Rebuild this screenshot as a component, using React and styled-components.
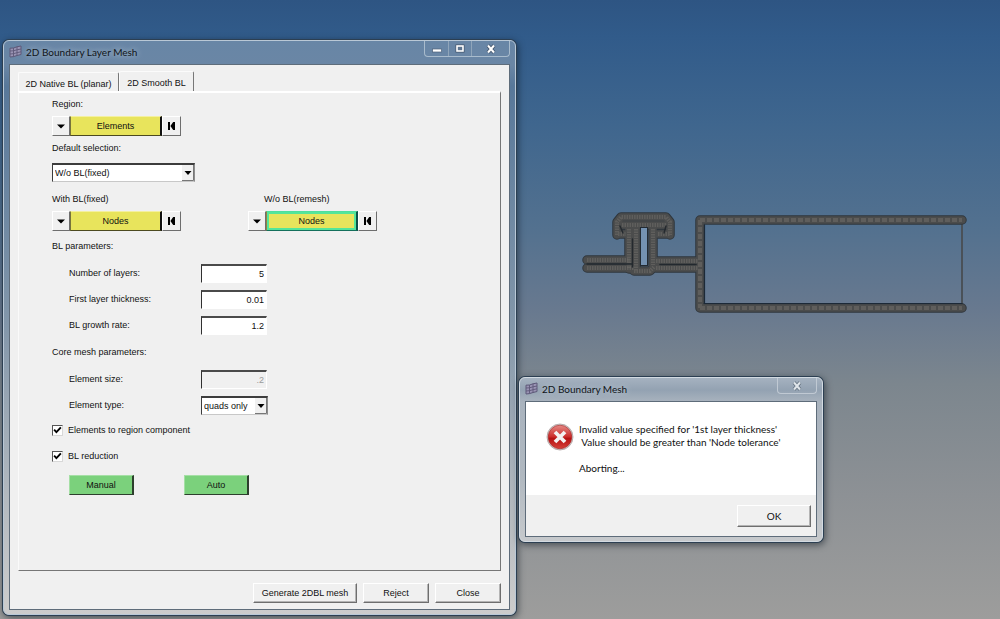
import React, { useState } from "react";
import styled, { createGlobalStyle, css } from "styled-components";

const Global = createGlobalStyle`
  *, *::before, *::after { box-sizing: border-box; }
  body { margin: 0; }
  button, input, select { font: inherit; color: inherit; margin: 0; border-radius: 0; }
`;

const uiFont = '"Liberation Sans", Arial, sans-serif';
const shellFont = 'Lato, "Open Sans", sans-serif';

const Desktop = styled.main`
  position: relative;
  min-height: 100vh;
  overflow: hidden;
  background: linear-gradient(#2e5583 0%, #315b8a 6%, #3f668e 20%, #53718f 37%, #68798f 50%, #7c868e 62%, #8d9195 80%, #9d9d9c 100%);
  font: 9px/14px ${uiFont};
  color: #101010;
`;

const ModelView = styled.svg`
  position: absolute;
  left: 580px;
  top: 205px;
  width: 392px;
  height: 112px;
`;

const frameLook = {
  main: css`
    left: 3px;
    top: 40px;
    width: 51.3%;
    min-width: 440px;
    border-color: #b9c8d6;
    background: linear-gradient(180deg, #6886a6 0, #6a86a5 24px, #58789a 45px, #8397aa 50%, #b3b9bf 80%, #cccccc 100%);
  `,
  dialog: css`
    left: 519px;
    top: 377px;
    width: 30.4%;
    min-width: 300px;
    border-color: #d3dbe2;
    background: linear-gradient(180deg, #a5b2c0 0, #93a2b2 12px, #a9b3be 24px, #b0b8c0 60%, #c6c9cc 100%);
  `,
};

const WindowFrame = styled.section`
  position: absolute;
  padding: 0 5px 4px;
  border: 1px solid;
  border-radius: 6px;
  box-shadow: 0 0 0 1px #2c3f52, 1px 2px 7px 1px rgba(10, 20, 30, 0.55);
  ${(p) => frameLook[p.$kind]}
`;

const TitleBar = styled.header`
  display: flex;
  align-items: flex-start;
  justify-content: space-between;
  height: 23px;
`;

const Title = styled.h1`
  display: flex;
  align-items: center;
  gap: 4px;
  height: 21px;
  margin: 0;
  font: 400 10px/14px ${shellFont};
  color: #101418;
  white-space: nowrap;
  text-shadow: 0 0 6px rgba(225, 235, 245, 0.8);
`;

const Captions = styled.div`
  display: flex;
  height: 16px;
  border: 1px solid ${(p) => (p.$soft ? "#c0c9d3" : "#a9bccd")};
  border-top: 0;
  border-radius: 0 0 4px 4px;
`;

const CaptionButton = styled.button`
  display: grid;
  place-items: center;
  width: ${(p) => (p.$wide ? 38 : 23)}px;
  padding: 0;
  border: 0;
  background: none;
  & + & { border-left: 1px solid #8fa5ba; }
`;

const Client = styled.div`
  border: 1px solid #5e6c7a;
  background: #f0f0f0;
`;

const MainClient = styled(Client)`
  padding: 6px 8px;
`;

const TabStrip = styled.div`
  display: flex;
  align-items: flex-end;
`;

const Tab = styled.button`
  height: ${(p) => (p.$active ? 20 : 19)}px;
  width: ${(p) => (p.$active ? 75 : 101)}px;
  padding: 3px 0 0;
  border: 0;
  border-top: 1px solid #fbfbfb;
  border-left: 1px solid #fbfbfb;
  border-right: 1px solid #777;
  border-radius: 2px 2px 0 0;
  background: #f0f0f0;
  white-space: nowrap;
`;

const Panel = styled.div`
  display: flex;
  flex-direction: column;
  padding: 4px 16px 75px 33px;
  border: 1px solid #767676;
  border-top: 2px solid #fff;
  border-left-color: #fafafa;
`;

const Group = styled.div`
  display: flex;
  flex-direction: column;
  align-items: flex-start;
  gap: ${(p) => p.$gap || 5}px;
  margin-bottom: ${(p) => p.$after || 0}px;
`;

const PickerRow = styled.div`
  display: flex;
  gap: 67px;
  margin-bottom: 8px;
`;

const Caption = styled.span`
  display: block;
  white-space: nowrap;
  padding-left: ${(p) => (p.$inset ? 16 : 0)}px;
`;

const Picker = styled.div`
  display: grid;
  grid-template-columns: 18px 92px 19px;
  height: 20px;
`;

const bevel = css`
  border: 1px solid;
  border-color: #fff #6e6e6e #6e6e6e #fff;
`;

const PickerButton = styled.button`
  display: grid;
  place-items: center;
  padding: 0;
  background: #f0f0f0;
  ${bevel}
`;

const PickerMain = styled.button`
  padding: 0;
  line-height: 12px;
  background: #e8e45c;
  border: 1px solid;
  border-color: #f4f0a0 #111 #4c4a20 #77733a;
  border-right-width: 2px;
  ${(p) =>
    p.$focused &&
    css`
      border-color: #4fdf9c #0d4f48 #14705c #9a8040;
      box-shadow: inset 0 0 0 2px #54e59a;
    `}
`;

const SelectBox = styled.span`
  position: relative;
  display: block;
  width: ${(p) => p.$width}px;
  svg {
    position: absolute;
    top: 2px;
    right: 1px;
    pointer-events: none;
  }
`;

const Select = styled.select`
  appearance: none;
  display: block;
  width: 100%;
  height: 19px;
  padding: 0 2px;
  border: 1px solid;
  border-color: #3c3c3c #8d8d8d #c8c8c8 #3c3c3c;
  border-top-width: 2px;
  background: #fff;
`;

const Fields = styled.div`
  display: flex;
  flex-direction: column;
  gap: 6px;
  padding: 5px 0 0 17px;
`;

const Field = styled.div`
  display: grid;
  grid-template-columns: 132px auto;
  justify-content: start;
  align-items: center;
  height: 20px;
`;

const TextBox = styled.input`
  width: 66px;
  height: 19px;
  padding: 0 2px 0 0;
  text-align: right;
  border: 1px solid;
  border-color: #4a4a4a #fff #fff #303030;
  border-top-width: 2px;
  background: #fff;
  &:disabled {
    background: #f0f0f0;
    color: #9a9a9a;
  }
`;

const Check = styled.label`
  display: flex;
  align-items: center;
  gap: 5px;
  input {
    appearance: none;
    width: 11px;
    height: 11px;
    border: 1px solid;
    border-color: #555 #d8d8d8 #d8d8d8 #555;
    background: #fff;
  }
  input:checked {
    background: #fff
      url("data:image/svg+xml,%3Csvg xmlns='http://www.w3.org/2000/svg' viewBox='0 0 8 8'%3E%3Cpath d='M1 3.3 3 5.4 7 1.2' fill='none' stroke='%23000' stroke-width='1.7'/%3E%3C/svg%3E");
  }
`;

const Actions = styled.div`
  display: flex;
  gap: 50px;
  padding-left: 17px;
`;

const ActionButton = styled.button`
  width: 65px;
  height: 20px;
  padding: 0;
  background: #7bd17c;
  border: 1px solid;
  border-color: #a5dfa5 #2d3f2d #2d3f2d #a5dfa5;
  border-right-width: 2px;
`;

const Footer = styled.footer`
  display: flex;
  justify-content: flex-end;
  gap: 6px;
  padding-top: 12px;
`;

const PushButton = styled.button`
  width: ${(p) => p.$width}px;
  height: ${(p) => (p.$tall ? 22 : 20)}px;
  padding: 0;
  background: #f0f0f0;
  ${bevel}
  box-shadow: inset -1px -1px #b4b4b4;
`;

const DialogClient = styled(Client)`
  font: 10px/13px ${shellFont};
`;

const Message = styled.div`
  display: flex;
  gap: 5px;
  padding: 21px 20px 20px;
  background: #fff;
  svg { flex: none; }
`;

const MessageText = styled.p`
  margin: 0;
  white-space: pre;
  color: #101010;
`;

const DialogFooter = styled.div`
  display: flex;
  justify-content: flex-end;
  padding: 10px 5px 9px;
`;

const Arrow = () => (
  <svg width="8" height="5" viewBox="0 0 8 5" aria-hidden="true">
    <path d="M0 0.5H8L4 4.5Z" fill="#000" />
  </svg>
);

const DropArrow = () => (
  <svg width="12" height="16" viewBox="0 0 12 16" aria-hidden="true">
    <rect width="12" height="16" fill="#f0f0f0" />
    <path d="M11.5 0V15.5H0" fill="none" stroke="#777" />
    <path d="M2.5 6H9.5L6 10Z" fill="#000" />
  </svg>
);

const ResetIcon = () => (
  <svg width="8" height="8" viewBox="0 0 8 8" aria-hidden="true">
    <path d="M0 0H2V8H0ZM5.2 0H7V8H5.2L2.4 4Z" fill="#000" />
  </svg>
);

const MeshIcon = () => (
  <svg width="13" height="13" viewBox="0 0 13 13" aria-hidden="true">
    <path d="M1 3.2 4.5 3 8 1.8 12 1V9.5L8 10.5 4.5 11.6 1 12Z" fill="#9a94b4" stroke="#5d5878" />
    <path d="M4.5 3V11.6M8 1.8V10.5M1 6 4.5 5.8 8 4.8 12 4M1 9 4.5 8.7 8 7.7 12 6.8" fill="none" stroke="#5d5878" strokeWidth="0.9" />
  </svg>
);

const MinimizeIcon = () => (
  <svg width="12" height="10" viewBox="0 0 12 10" aria-hidden="true">
    <rect x="1.5" y="5" width="9" height="3" fill="#fff" stroke="#4c6078" strokeWidth="0.7" />
  </svg>
);

const MaximizeIcon = () => (
  <svg width="12" height="10" viewBox="0 0 12 10" aria-hidden="true">
    <rect x="3" y="2" width="6" height="5" fill="none" stroke="#43556b" strokeWidth="3" />
    <rect x="3" y="2" width="6" height="5" fill="#5d7590" stroke="#fff" strokeWidth="1.6" />
  </svg>
);

const CloseIcon = ({ faded }) => (
  <svg width="12" height="10" viewBox="0 0 12 10" aria-hidden="true">
    <path d="M3 1.5 9 8.5M9 1.5 3 8.5" stroke={faded ? "#667482" : "#43556b"} strokeWidth="3.6" />
    <path d="M3 1.5 9 8.5M9 1.5 3 8.5" stroke={faded ? "#dfe5ea" : "#fff"} strokeWidth="2" />
  </svg>
);

const ErrorIcon = () => (
  <svg width="28" height="28" viewBox="0 0 28 28" aria-hidden="true">
    <defs>
      <linearGradient id="errorFill" x1="0" y1="0" x2="0" y2="1">
        <stop offset="0" stopColor="#e58a86" />
        <stop offset="0.5" stopColor="#cb2a28" />
        <stop offset="0.55" stopColor="#b51011" />
        <stop offset="1" stopColor="#d6423a" />
      </linearGradient>
    </defs>
    <circle cx="14" cy="14" r="13" fill="#d9d2d2" stroke="#a9a0a0" strokeWidth="0.8" />
    <circle cx="14" cy="14" r="11.8" fill="url(#errorFill)" stroke="#a52424" strokeWidth="0.6" />
    <path d="M9 9 19 19M19 9 9 19" stroke="#f4f1f1" strokeWidth="3.8" />
  </svg>
);

const strands = [
  "M120 15H382M120 103H382M120 15V103",
  "M7 55H50M7 63H54M76 56H118M76 63H118",
  "M37 30V17L41 12H86L90 17V30M42 20H86M38 29H46M78 29H90",
  "M49 24V64M56 24V66M73 24V60M54 66H70L74 62",
];

const Model = () => (
  <ModelView viewBox="0 0 392 112" role="img" aria-label="Meshed profile">
    <g fill="none" strokeLinejoin="round" strokeLinecap="round">
      <path d="M382 18V100" stroke="#4a5158" strokeWidth="2" />
      {strands.map((d) => (
        <path key={`e${d}`} d={d} stroke="#2f363c" strokeWidth="9.5" />
      ))}
      {strands.map((d) => (
        <path key={`b${d}`} d={d} stroke="#4b4c4c" strokeWidth="7.5" />
      ))}
      {strands.map((d, i) => (
        <path key={`n${d}`} d={d} stroke="#6d6a67" strokeLinecap="butt" strokeWidth="4" strokeDasharray={i === 0 ? "5 2" : "1.5 1"} opacity="0.6" />
      ))}
      <path d="M7 59H52M80 59.5H116" stroke="#22282e" strokeWidth="1.6" />
      <path d="M40 21 43 28M86 21 84 28M52.5 34V62" stroke="#24292e" strokeWidth="1.4" />
      <path d="M124.5 20V98M124 98.5H382" stroke="#1c2937" strokeWidth="1.2" />
    </g>
    <rect x="60.5" y="22.5" width="7" height="38" fill="#7492b2" stroke="#232b33" />
  </ModelView>
);

function PickerControl({ label, text, inset, focused }) {
  return (
    <Group>
      <Caption $inset={inset}>{label}</Caption>
      <Picker role="group" aria-label={label}>
        <PickerButton aria-label="Entity type"><Arrow /></PickerButton>
        <PickerMain $focused={focused}>{text}</PickerMain>
        <PickerButton aria-label="Reset"><ResetIcon /></PickerButton>
      </Picker>
    </Group>
  );
}

function NumberField({ id, label, value, disabled }) {
  return (
    <Field>
      <label htmlFor={id}>{label}</label>
      <TextBox id={id} defaultValue={value} disabled={disabled} />
    </Field>
  );
}

function CheckField({ label }) {
  const [on, setOn] = useState(true);
  return (
    <Check>
      <input type="checkbox" checked={on} onChange={() => setOn(!on)} />
      {label}
    </Check>
  );
}

function MeshWindow() {
  return (
    <WindowFrame $kind="main">
      <TitleBar>
        <Title><MeshIcon />2D Boundary Layer Mesh</Title>
        <Captions>
          <CaptionButton aria-label="Minimize"><MinimizeIcon /></CaptionButton>
          <CaptionButton aria-label="Maximize"><MaximizeIcon /></CaptionButton>
          <CaptionButton $wide aria-label="Close window"><CloseIcon /></CaptionButton>
        </Captions>
      </TitleBar>
      <MainClient>
        <TabStrip role="tablist">
          <Tab role="tab" aria-selected="false">2D Native BL (planar)</Tab>
          <Tab role="tab" aria-selected="true" $active>2D Smooth BL</Tab>
        </TabStrip>
        <Panel role="tabpanel">
          <Group $after={5}>
            <PickerControl label="Region:" text="Elements" />
          </Group>
          <Group $gap={8} $after={10}>
            <label htmlFor="selection">Default selection:</label>
            <SelectBox $width={143}>
              <Select id="selection" defaultValue="fixed">
                <option value="fixed">W/o BL(fixed)</option>
              </Select>
              <DropArrow />
            </SelectBox>
          </Group>
          <PickerRow>
            <PickerControl label="With BL(fixed)" text="Nodes" />
            <PickerControl label="W/o BL(remesh)" text="Nodes" inset focused />
          </PickerRow>
          <Group $after={10}>
            <Caption>BL parameters:</Caption>
            <Fields>
              <NumberField id="layers" label="Number of layers:" value="5" />
              <NumberField id="thickness" label="First layer thickness:" value="0.01" />
              <NumberField id="growth" label="BL growth rate:" value="1.2" />
            </Fields>
          </Group>
          <Group $after={8}>
            <Caption>Core mesh parameters:</Caption>
            <Fields>
              <NumberField id="size" label="Element size:" value=".2" disabled />
              <Field>
                <label htmlFor="type">Element type:</label>
                <SelectBox $width={67}>
                  <Select id="type" defaultValue="quads">
                    <option value="quads">quads only</option>
                  </Select>
                  <DropArrow />
                </SelectBox>
              </Field>
            </Fields>
          </Group>
          <Group $gap={12} $after={12}>
            <CheckField label="Elements to region component" />
            <CheckField label="BL reduction" />
          </Group>
          <Actions>
            <ActionButton>Manual</ActionButton>
            <ActionButton>Auto</ActionButton>
          </Actions>
        </Panel>
        <Footer>
          <PushButton $width={104}>Generate 2DBL mesh</PushButton>
          <PushButton $width={66}>Reject</PushButton>
          <PushButton $width={66}>Close</PushButton>
        </Footer>
      </MainClient>
    </WindowFrame>
  );
}

function ErrorDialog() {
  return (
    <WindowFrame $kind="dialog" role="alertdialog">
      <TitleBar>
        <Title as="h2"><MeshIcon />2D Boundary Mesh</Title>
        <Captions $soft>
          <CaptionButton $wide aria-label="Close dialog"><CloseIcon faded /></CaptionButton>
        </Captions>
      </TitleBar>
      <DialogClient>
        <Message>
          <ErrorIcon />
          <MessageText>{"Invalid value specified for '1st layer thickness'\n Value should be greater than 'Node tolerance'\n\nAborting..."}</MessageText>
        </Message>
        <DialogFooter>
          <PushButton $width={74} $tall>OK</PushButton>
        </DialogFooter>
      </DialogClient>
    </WindowFrame>
  );
}

export default function App() {
  return (
    <>
      <Global />
      <Desktop>
        <Model />
        <MeshWindow />
        <ErrorDialog />
      </Desktop>
    </>
  );
}
